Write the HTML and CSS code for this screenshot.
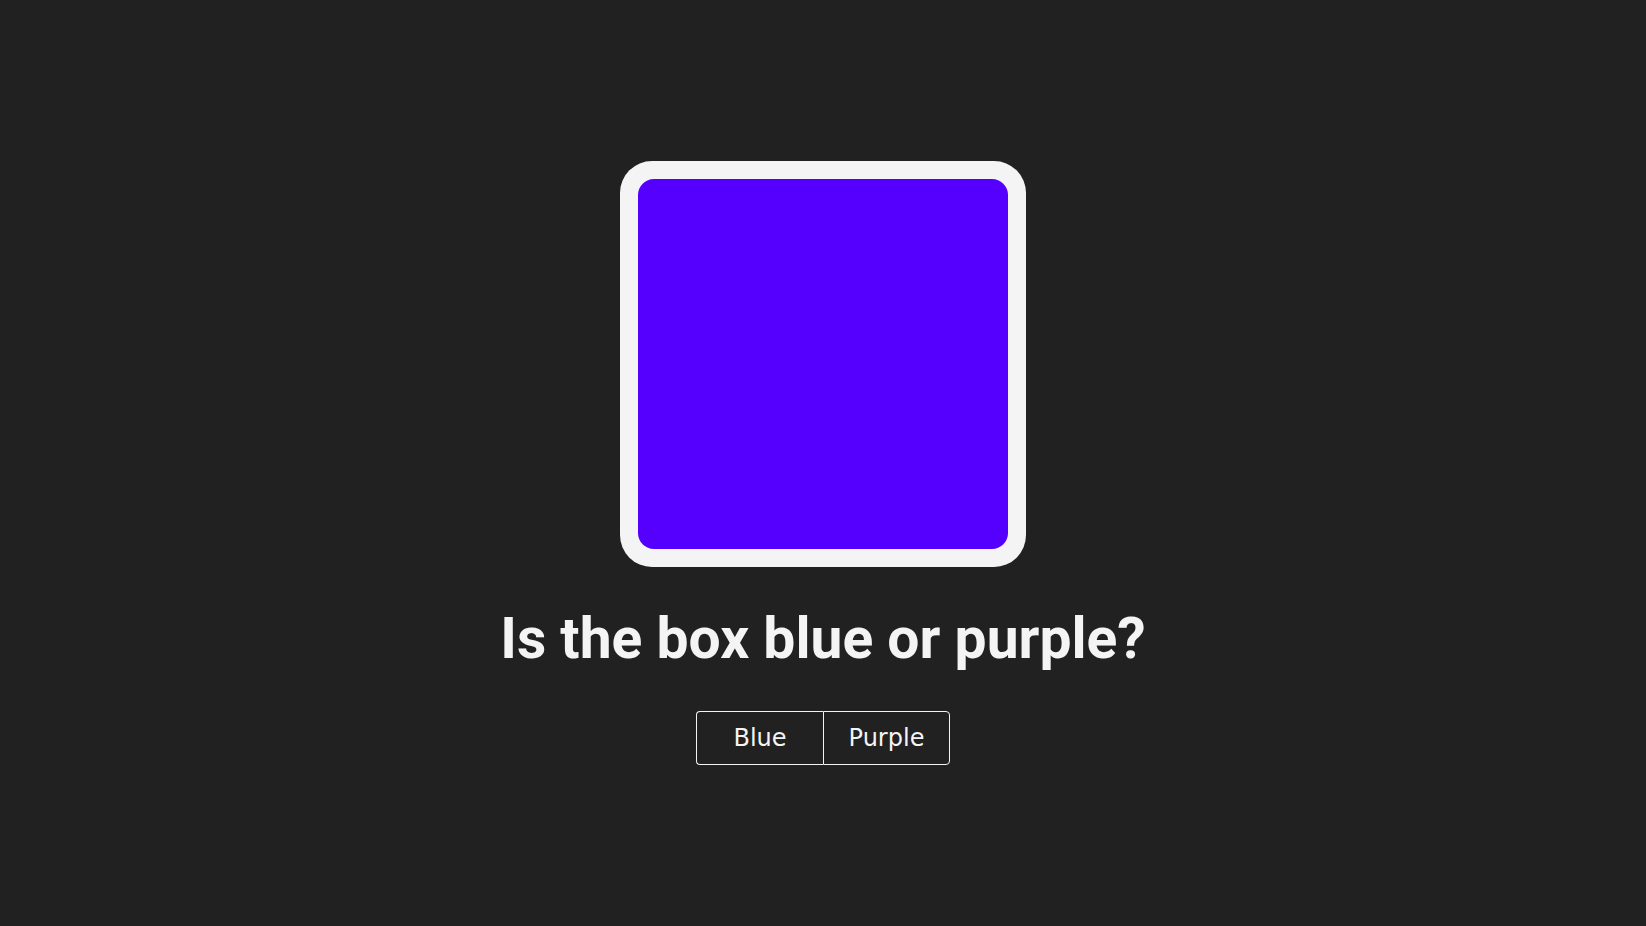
FILE: index.html
```html
<!DOCTYPE html>
<html lang="en">
<head>
<meta charset="utf-8">
<title>Blue or Purple</title>
<link rel="stylesheet" href="styles.css">
</head>
<body>
<main class="stage">
  <div class="frame">
    <div class="swatch"></div>
  </div>
  <h1 class="question">Is the box blue or purple?</h1>
  <div class="choices">
    <button class="choice choice-first" type="button">Blue</button>
    <button class="choice choice-last" type="button">Purple</button>
  </div>
</main>
</body>
</html>
```

FILE: styles.css
```css
html, body {
  margin: 0;
  padding: 0;
  background: #212121;
}

.stage {
  min-height: 100vh;
  display: flex;
  flex-direction: column;
  align-items: center;
  justify-content: center;
  gap: 39px;
}

.frame {
  box-sizing: border-box;
  width: 406px;
  height: 406px;
  padding: 18px;
  background: #f4f4f4;
  border-radius: 32px;
}

.swatch {
  width: 100%;
  height: 100%;
  background: #5500ff;
  border-radius: 16px;
}

.question {
  margin: 0;
  font-family: Roboto, "Liberation Sans", sans-serif;
  font-weight: 700;
  font-size: 57px;
  line-height: 66px;
  color: #f4f4f4;
  text-align: center;
}

.choices {
  display: flex;
}

.choice {
  box-sizing: border-box;
  width: 127px;
  margin: 0;
  padding: 12px 0;
  background: #212121;
  color: #f4f4f4;
  font-family: "DejaVu Sans", sans-serif;
  font-size: 24px;
  line-height: 28px;
  border: 1px solid #f4f4f4;
  text-align: center;
  cursor: pointer;
}

.choice-first {
  border-right: none;
  border-radius: 4px 0 0 4px;
}

.choice-last {
  border-radius: 0 4px 4px 0;
}
```
